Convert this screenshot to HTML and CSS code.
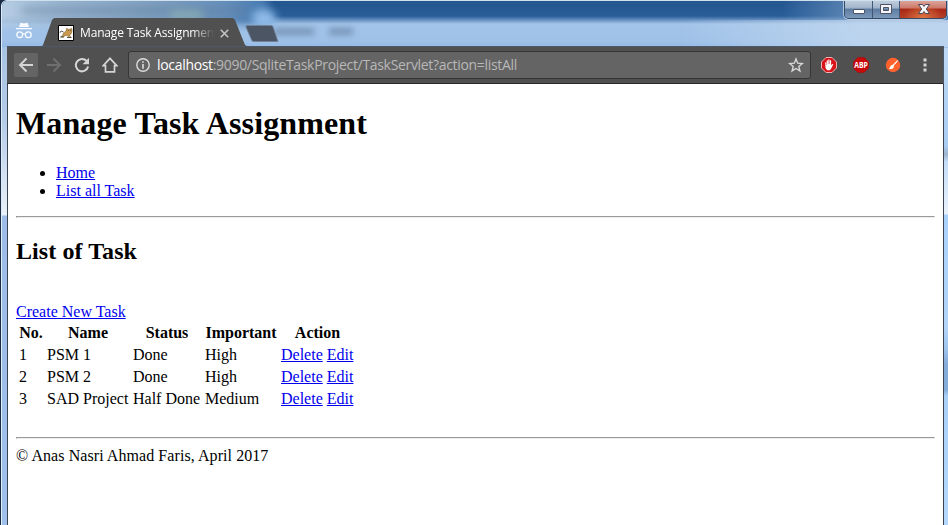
FILE: index.html
```html
<!DOCTYPE html>
<html lang="en">
<head>
<meta charset="utf-8">
<title>Manage Task Assignment</title>
<link rel="stylesheet" href="styles.css">
</head>
<body>
<div class="window">
  <div class="glass" aria-hidden="true">
    <span class="smudge smudge-title"></span>
    <span class="smudge smudge-caption"></span>
    <span class="smudge smudge-menu"></span>
    <span class="smudge smudge-help"></span>
    <span class="smudge smudge-green"></span>
    <span class="smudge smudge-light"></span>
  </div>
  <div class="controls">
    <span class="control minimize"><svg width="28" height="18" viewBox="0 0 28 18"><rect x="8.500" y="9.500" width="11" height="4" rx=".5" fill="#fff" stroke="#4c5369"/></svg></span>
    <span class="control maximize"><svg width="26" height="18" viewBox="0 0 26 18"><path fill="#f5f5f7" stroke="#4c5369" fill-rule="evenodd" d="M7.500 4.500h11v9h-11zM10.500 7.500v3h5v-3z"/></svg></span>
    <span class="control close"><svg width="47" height="18" viewBox="0 0 47 18"><path fill="#f7f7f7" stroke="#4c4558" stroke-linejoin="round" d="M18.500 4.500h4l1.500 2 1.500-2h4l-3.200 4.500 3.200 4.500h-4l-1.500-2-1.500 2h-4l3.200-4.500z"/></svg></span>
  </div>
  <div class="tabstrip">
    <svg class="incognito" width="18" height="18" viewBox="0 0 18 18"><path fill="#f8fbff" d="M5.500.8 9 1.500l3.500-.7L14 5H4zM1 6h16v1.300H1z"/><g fill="none" stroke="#f8fbff" stroke-width="1.300"><circle cx="4.700" cy="12.700" r="2.900"/><circle cx="13.300" cy="12.700" r="2.900"/><path d="M7.600 12.300q1.400-.8 2.800 0"/></g></svg>
    <div class="tab">
      <svg class="favicon" width="16" height="16" viewBox="0 0 16 16"><path fill="#fff" stroke="#000" d="M.5.500h15v15H.5z"/><path fill="#c99a4e" stroke="#765524" stroke-width=".5" d="M8.500 3.200l1.500 1h2l1.800-1 .2 3.500-1.100 2.400-1.400.8.700 1.600 1.500 1.100h-2.500l-1.600-1.800-2.400-.3-2 1.700H2.700l2-2 .8-2.300L8 6.200z"/><path fill="none" stroke="#4e5b58" d="M5.500 7Q2 5 2.200 7.700M2.500 11.800H6M9 12.500h4"/><path fill="#333" d="M9.800 5.200h.8v.8h-.8zM12 5h.8v.8H12z"/></svg>
      <span class="tab-title">Manage Task Assignmen</span>
      <svg class="tab-close" width="9" height="9" viewBox="0 0 9 9"><path stroke="#c4c4c4" stroke-width="1.600" d="M.8.800l7.400 7.400M8.200.800.8 8.200"/></svg>
    </div>
    <svg class="new-tab" width="34" height="17" viewBox="0 0 34 17"><path fill="#4b5563" stroke="#728299" d="M2 .5h24q1.500 0 2 1.300L33 16.500H9q-1.800 0-2.300-1.300L1 2Q.6.500 2 .5z"/></svg>
  </div>
  <div class="toolbar">
    <span class="tool back"><svg width="16" height="16" viewBox="0 0 16 16"><path fill="none" stroke="#d5d5d5" stroke-width="1.900" d="M15 8H2.500M8.500 1.500 2 8l6.500 6.500"/></svg></span>
    <span class="tool"><svg width="16" height="16" viewBox="0 0 16 16"><path fill="none" stroke="#6f6f6f" stroke-width="1.900" d="M1 8h12.500M7.500 1.500 14 8l-6.500 6.500"/></svg></span>
    <span class="tool"><svg width="16" height="16" viewBox="0 0 16 16"><path fill="none" stroke="#d5d5d5" stroke-width="2" d="M14.100 9.600A6.200 6.200 0 1 1 12.500 3.800"/><path fill="#d5d5d5" d="M15 .8v6.400H8.600z"/></svg></span>
    <span class="tool"><svg width="16" height="16" viewBox="0 0 16 16"><path fill="none" stroke="#d5d5d5" stroke-width="1.700" d="M8 1.300 14.800 8.700h-2.300v6.200h-9V8.700H1.200z"/></svg></span>
    <div class="address">
      <svg class="info" width="14" height="14" viewBox="0 0 14 14"><circle cx="7" cy="7" r="6.200" fill="none" stroke="#ddd" stroke-width="1.400"/><path fill="#ddd" d="M6.200 3.200h1.600v1.600H6.200zM6.200 6h1.600v4.800H6.200z"/></svg>
      <span class="url"><b>localhost</b>:9090/SqliteTaskProject/TaskServlet?action=listAll</span>
      <svg class="star" width="16" height="16" viewBox="0 0 16 16"><path fill="none" stroke="#d8d8d8" stroke-width="1.400" d="M8 1.900l1.700 4.300 4.600.3-3.500 3 1.100 4.400L8 11.500l-3.900 2.400 1.100-4.400-3.500-3 4.600-.3z"/></svg>
    </div>
    <svg class="ext" width="16" height="16" viewBox="0 0 16 16"><path fill="#d9151b" stroke="#edb0b0" d="M5 .5h6L15.500 5v6L11 15.500H5L.5 11V5z"/><path fill="#fff" d="M4.200 5.400q.8-.6 1.100.2V8h.4V3.600q.6-.9 1.200 0V7h.4V2.800q.6-.9 1.200 0V7h.4V3.500q.6-.9 1.200 0v5l.9-1.300q.8-.4 1.200.2l-2 4.200-1.300 1.700H6.200L4.500 11z"/></svg>
    <svg class="ext" width="16" height="16" viewBox="0 0 16 16"><path fill="#c90808" stroke="#9c1111" stroke-width=".6" d="M4.900.4h6.200l4.500 4.500v6.200l-4.500 4.500H4.900L.4 11.100V4.900z"/><text class="abp" x="8" y="11" text-anchor="middle" textLength="13.500" lengthAdjust="spacingAndGlyphs">ABP</text></svg>
    <svg class="ext" width="16" height="16" viewBox="0 0 16 16"><circle cx="8" cy="8" r="7.200" fill="#ff622d"/><path fill="#fff" d="M12.500 3.100q.7.500.1 1.300L8.900 8.600q.2 2.400-1.600 3.200-1.700.6-3.400-.3Q5.200 10.600 5.400 9.200q.8-1.600 2.500-1.500z"/></svg>
    <svg class="menu" width="4" height="14" viewBox="0 0 4 14"><path fill="#d3d3d3" d="M.5.500h3v3h-3zM.5 5.500h3v3h-3zM.5 10.500h3v3h-3z"/></svg>
  </div>
  <div class="viewport">
    <h1>Manage Task Assignment</h1>
    <ul>
      <li><a href="#">Home</a></li>
      <li><a href="#">List all Task</a></li>
    </ul>
    <hr>
    <h2>List of Task</h2>
    <br>
    <a href="#" class="create">Create New Task</a>
    <table>
      <colgroup><col class="c-no"><col class="c-name"><col class="c-status"><col class="c-important"><col class="c-action"></colgroup>
      <tr><th>No.</th><th>Name</th><th>Status</th><th>Important</th><th>Action</th></tr>
      <tr><td>1</td><td>PSM 1</td><td>Done</td><td>High</td><td><a href="#">Delete</a> <a href="#">Edit</a></td></tr>
      <tr><td>2</td><td>PSM 2</td><td>Done</td><td>High</td><td><a href="#">Delete</a> <a href="#">Edit</a></td></tr>
      <tr><td>3</td><td>SAD Project</td><td>Half Done</td><td>Medium</td><td><a href="#">Delete</a> <a href="#">Edit</a></td></tr>
    </table>
    <br>
    <hr>
    <div class="copyright">© Anas Nasri Ahmad Faris, April 2017</div>
  </div>
</div>
</body>
</html>
```
FILE: styles.css
```css
* { box-sizing: border-box; }
html, body { margin: 0; height: 100%; overflow: hidden; }
body { background: #1c2b44; }
svg { display: block; flex: none; }

.window {
  position: relative;
  display: flex;
  flex-direction: column;
  height: 525px;
  margin-left: 1px;
  padding: 0 4px 0 5px;
  border-left: 1px solid #dcecf9;
  border-top: 1px solid #cfe0ee;
  border-top-left-radius: 6px;
  overflow: hidden;
  background:
    linear-gradient(#bdd9f5 0, #a9cdf2 98px, #9db4ce 106px, #c5def7 114px, #eaf2fb 166px, #a9d2fb 167px, #b2d5f8 280px, #a0c6ee 300px, #85add9 316px, #85add9 342px, #a9d1f8 348px, #b4d8fb 100%) right 47px / 5px 478px no-repeat,
    linear-gradient(#a9c4e3 0, #b3cbe8 70px, #eaf1fa 167px, #9dbde8 168px, #9fc0ea 100%) 0 47px / 6px 478px no-repeat,
    #a0c1e8;
}

/* blurred content showing through the window frame */
.glass {
  position: absolute;
  inset: 0 0 auto 0;
  height: 46px;
  overflow: hidden;
  background:
    linear-gradient(90deg, transparent 780px, #8fb0d480 850px, transparent) 0 0 / 100% 19px no-repeat,
    linear-gradient(90deg, transparent 680px, #c5daf0c0 860px, #c5daf0c0) 0 19px / 100% 27px no-repeat,
    linear-gradient(#24568f 0, #285d98 15px, #6790c0 19px, #a3c4e9 23px, #9fc1e8 40px, #94bae5 100%);
}
.smudge { position: absolute; filter: blur(4px); }
.smudge-title {
  left: -8px; top: -8px; width: 274px; height: 32px;
  background: linear-gradient(90deg, #b9cfe6, #9ab6d1 25%, #7f9fc0 60%, #6690bd 85%, #4377af);
}
.smudge-caption { left: 20px; top: 7px; width: 225px; height: 5px; background: #5a7798a0; filter: blur(4px); }
.smudge-menu { left: 272px; top: 27px; width: 40px; height: 7px; background: #7593b6; filter: blur(3px); }
.smudge-help { left: 327px; top: 27px; width: 24px; height: 7px; background: #7593b6; filter: blur(3px); }
.smudge-green { left: 168px; top: 9px; width: 32px; height: 10px; background: #85aab4; }
.smudge-light { left: 250px; top: 8px; width: 24px; height: 20px; border-radius: 50%; background: #8fbbe9; }

.controls {
  position: absolute;
  top: -1px;
  right: 1px;
  display: flex;
  height: 19px;
  border: 1px solid #344a66;
  border-top: 0;
  border-radius: 0 0 5px 5px;
  box-shadow: 0 0 0 1px #dbe6f2b0;
  overflow: hidden;
}
.control {
  background: linear-gradient(#c4d1df 0, #9fb3ca 45%, #5d7b9f 50%, #7d9abc 100%);
  border-right: 1px solid #405775;
}
.minimize { width: 28px; }
.maximize { width: 27px; }
.close {
  width: 46px;
  border: 0;
  background: radial-gradient(ellipse at 50% 100%, #dd7340 0, transparent 60%), linear-gradient(#dfaaa0 0, #cb786b 45%, #a72817 50%, #b63f26 100%);
}

.tabstrip {
  position: relative;
  display: flex;
  flex: none;
  height: 45px;
  padding: 17px 0 0 8px;
}
.incognito { margin-top: 4px; }
.tab {
  display: flex;
  align-items: flex-start;
  width: 208px;
  height: 29px;
  margin-left: 8px;
  padding: 7px 0 0 17px;
  background: #505050;
  clip-path: polygon(0 100%, 2px 27px, 11px 2px, 13px 0, 192px 0, 194px 2px, 204px 27px, 100% 100%);
}
.tab-title {
  width: 135px;
  height: 18px;
  margin-left: 6px;
  white-space: nowrap;
  color: #fff;
  font: 12px/16px "Open Sans", "Noto Sans", sans-serif;
  letter-spacing: -.16px;
  -webkit-mask-image: linear-gradient(90deg, #000 112px, transparent 134px);
  mask-image: linear-gradient(90deg, #000 112px, transparent 134px);
}
.tab-close { margin: 4px 0 0 5px; }
.new-tab { margin: 7px 0 0 -4px; }

.toolbar {
  position: relative;
  display: flex;
  flex: none;
  align-items: center;
  height: 38px;
  padding: 0 13px 2px 7px;
  background: #505050;
  border: solid #4c596b;
  border-width: 1px 1px 0 0;
  box-shadow: inset 0 -1px #292929;
}
.tool {
  display: grid;
  place-items: center;
  width: 24px;
  height: 24px;
  margin-right: 4px;
  border-radius: 2px;
}
.back { background: #646464; }
.address {
  display: flex;
  align-items: center;
  width: 683px;
  height: 28px;
  margin: 0 10px 0 2px;
  padding: 0 6px 0 7px;
  border: 1px solid #353535;
  border-radius: 3px;
  background: #646464;
}
.url {
  flex: 1;
  margin-left: 7px;
  white-space: nowrap;
  color: #b8b8b8;
  font: 14px/20px "Open Sans", "Noto Sans", sans-serif;
  letter-spacing: -.32px;
}
.url b { color: #fff; font-weight: 400; }
.ext { margin-right: 16px; overflow: visible; }
.abp { fill: #fff; font: bold 8.5px "Open Sans", sans-serif; }
.menu { margin-left: 6px; }

.viewport {
  flex: 1;
  min-height: 0;
  padding: 0 8px;
  overflow: hidden;
  border: solid #39434f;
  border-width: 0 1px;
  background: #fff;
  color: #000;
  font: 16px/18px "Liberation Serif", "Times New Roman", serif;
}
h1 { margin: 21.4px 0; font-size: 32px; line-height: 37px; letter-spacing: .11px; }
h2 { margin: 19.9px 0; font-size: 24px; line-height: 27px; letter-spacing: .08px; }
ul { margin: 16px 0; padding-left: 40px; }
hr { margin: 8px 0; border: 1px solid; border-color: #9a9a9a #eee #eee #9a9a9a; }
ul + hr { margin-top: 16px; }
a { color: #00e; text-decoration: underline; }
.create { display: block; width: max-content; }
table { width: 341px; table-layout: fixed; border-spacing: 2px; }
th, td { padding: 1px; white-space: nowrap; line-height: 18px; }
.copyright { letter-spacing: .07px; }
.c-no { width: 26px; }
.c-name { width: 84px; }
.c-status { width: 70px; }
.c-important { width: 74px; }
.c-action { width: 75px; }
```
